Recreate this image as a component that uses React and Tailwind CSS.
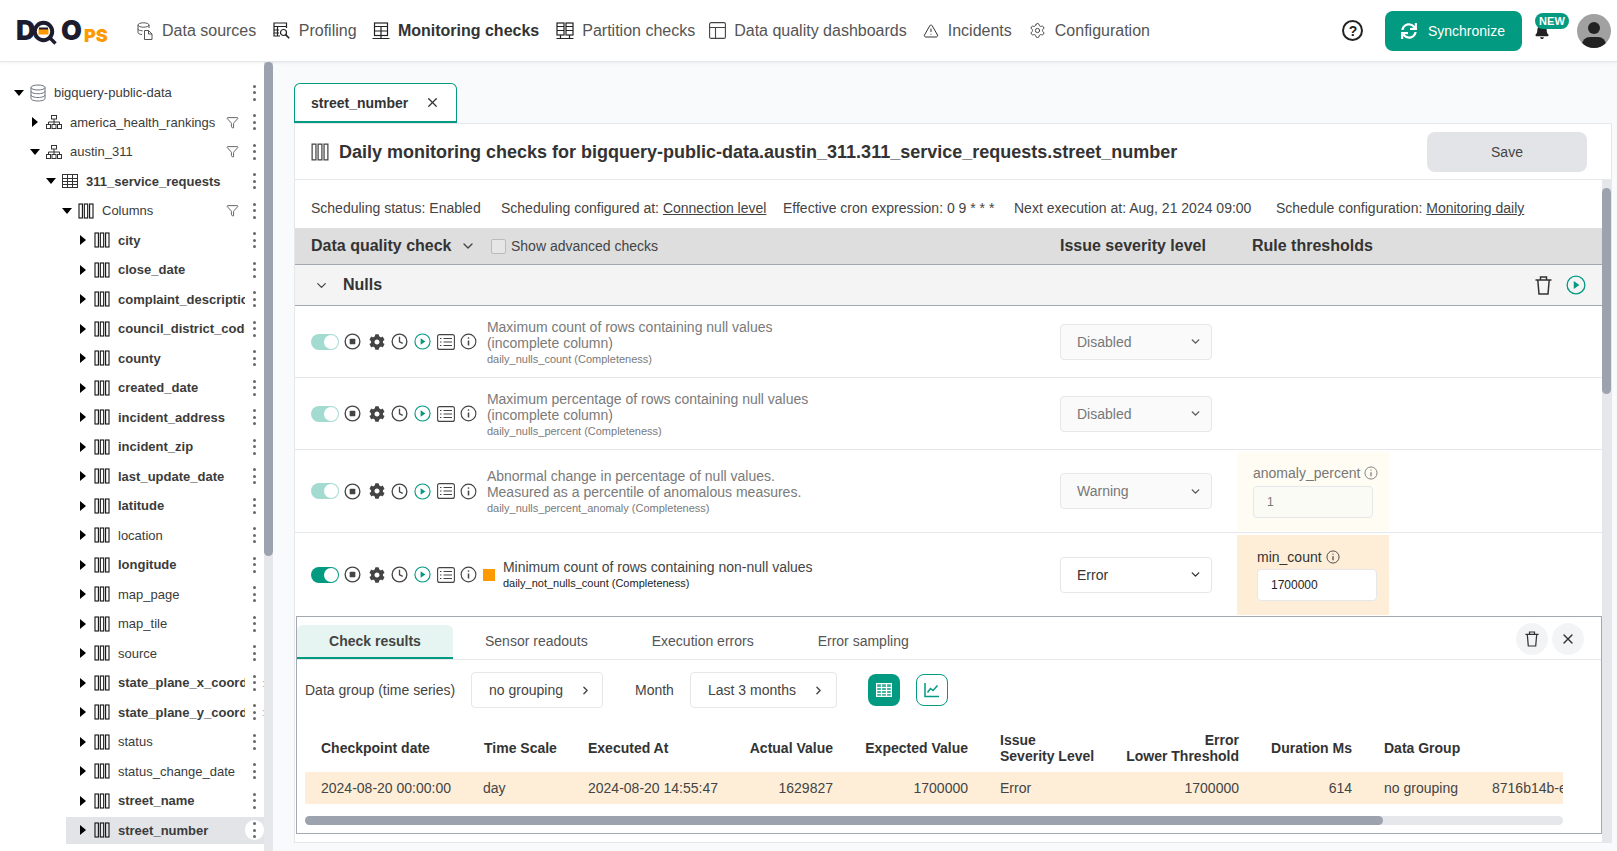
import { FaBell, FaCog, FaSync } from "react-icons/fa";
import { ChevronDown, ChevronRight, Filter, Settings, TriangleAlert, X } from "lucide-react";

const tree = [
  { name: "bigquery-public-data", level: 0, open: true, icon: "db" },
  { name: "america_health_rankings", level: 1, icon: "schema", filter: true },
  { name: "austin_311", level: 1, open: true, icon: "schema", filter: true },
  { name: "311_service_requests", level: 2, open: true, icon: "table", bold: true },
  { name: "Columns", level: 3, open: true, icon: "col", filter: true },
  { name: "city", bold: true },
  { name: "close_date", bold: true },
  { name: "complaint_description", bold: true },
  { name: "council_district_code", bold: true },
  { name: "county", bold: true },
  { name: "created_date", bold: true },
  { name: "incident_address", bold: true },
  { name: "incident_zip", bold: true },
  { name: "last_update_date", bold: true },
  { name: "latitude", bold: true },
  { name: "location" },
  { name: "longitude", bold: true },
  { name: "map_page" },
  { name: "map_tile" },
  { name: "source" },
  { name: "state_plane_x_coordinate", bold: true, extra: true },
  { name: "state_plane_y_coordinate", bold: true, extra: true },
  { name: "status" },
  { name: "status_change_date" },
  { name: "street_name", bold: true },
  { name: "street_number", bold: true, active: true },
];

const indent = ["pl-[14px]", "pl-[30px]", "pl-[46px]", "pl-[62px]", "pl-[78px]"];

function ColIcon({ className = "w-4 h-4", color = "#111" }) {
  return (
    <svg viewBox="0 0 16 16" className={className} fill="none" stroke={color} strokeWidth="1.1">
      <rect x="1" y="1" width="3.4" height="14" />
      <rect x="6.3" y="1" width="3.4" height="14" />
      <rect x="11.6" y="1" width="3.4" height="14" />
    </svg>
  );
}

function DbIcon() {
  return (
    <svg viewBox="0 0 16 18" className="w-4 h-[18px]" fill="none" stroke="#6b7280" strokeWidth="1">
      <ellipse cx="8" cy="3.5" rx="7" ry="2.5" />
      <path d="M1 3.5v11c0 1.4 3.1 2.5 7 2.5s7-1.1 7-2.5v-11M1 7.2c0 1.4 3.1 2.5 7 2.5s7-1.1 7-2.5M1 11c0 1.4 3.1 2.5 7 2.5s7-1.1 7-2.5" />
    </svg>
  );
}

function SchemaIcon() {
  return (
    <svg viewBox="0 0 16 14" className="w-4 h-[14px]" fill="none" stroke="#333" strokeWidth="1">
      <rect x="5.5" y="0.5" width="5" height="3.5" />
      <rect x="0.5" y="9.5" width="4" height="4" />
      <rect x="6" y="9.5" width="4" height="4" />
      <rect x="11.5" y="9.5" width="4" height="4" />
      <path d="M8 4v5.5M2.5 9.5V7h11v2.5" />
    </svg>
  );
}

function TableIcon() {
  return (
    <svg viewBox="0 0 16 14" className="w-4 h-[14px]" fill="none" stroke="#333" strokeWidth="1">
      <rect x="0.5" y="0.5" width="15" height="13" />
      <path d="M0.5 4.5h15M0.5 7.5h15M0.5 10.5h15M5.5 0.5v13M10.5 0.5v13" />
    </svg>
  );
}

function Dots({ boxed }) {
  return (
    <div className={`flex flex-col items-center justify-center gap-[3.5px] ${boxed ? "w-[20px] h-[20px] rounded-full bg-white" : "w-[20px] h-[20px]"}`}>
      <span className="w-[3px] h-[3px] rounded-full bg-[#666]" />
      <span className="w-[3px] h-[3px] rounded-full bg-[#666]" />
      <span className="w-[3px] h-[3px] rounded-full bg-[#666]" />
    </div>
  );
}

function TreeRow({ item }) {
  const level = item.level ?? 4;
  const icon = item.icon ?? "col";
  return (
    <div className={`relative flex items-center h-[29.5px] ${indent[level]}`}>
      {item.active && <div className="absolute left-[66px] right-0 top-[1px] bottom-[1.5px] bg-[#e2e4e8]" />}
      <div className="relative w-4 flex justify-start">
        {item.open ? (
          <span className="w-0 h-0 border-x-[5px] border-x-transparent border-t-[6px] border-t-black" />
        ) : (
          <span className="ml-[2px] w-0 h-0 border-y-[5.5px] border-y-transparent border-l-[6px] border-l-black" />
        )}
      </div>
      <div className="relative w-4 flex justify-center">
        {icon === "db" && <DbIcon />}
        {icon === "schema" && <SchemaIcon />}
        {icon === "table" && <TableIcon />}
        {icon === "col" && <ColIcon />}
      </div>
      <div className={`relative ml-2 flex-1 min-w-0 overflow-hidden whitespace-nowrap text-[13px] text-[#3b3b3b] ${item.bold ? "font-bold" : ""}`}>
        {item.name}
      </div>
      {item.filter && (
        <div className="relative mr-[3px] w-5 flex justify-center">
          <Filter className="w-[13px] h-[13px] text-[#444]" strokeWidth={1.5} />
        </div>
      )}
      <div className="relative w-[19px] flex justify-start">
        <Dots boxed={item.active} />
        {item.extra && <span className="absolute left-[17px] top-[3px] text-[10px] text-[#aaa]">:</span>}
      </div>
    </div>
  );
}

function DataSourcesIcon() {
  return (
    <svg viewBox="0 0 16 18" className="w-4 h-[18px]" fill="none" stroke="#555" strokeWidth="1">
      <ellipse cx="6.5" cy="3" rx="5.5" ry="2.2" />
      <path d="M1 3v7.5c0 1 1.5 1.8 4 2M12 3v3M1 6.8c0 1.1 2 2 4.5 2" />
      <path d="M7.5 8.5h4l3.5 3.5v5.5h-7.5z" />
      <path d="M11.5 8.5v3.5H15" />
    </svg>
  );
}

function ProfilingIcon() {
  return (
    <svg viewBox="0 0 17 17" className="w-[17px] h-[17px]" fill="none" stroke="#222" strokeWidth="1.2">
      <path d="M13.5 6V1H1v13h6" />
      <path d="M1 4.5h12.5M1 8h5M1 11h5M4.5 4.5V14" />
      <circle cx="10.5" cy="10.5" r="3" />
      <path d="M12.6 12.6l3.6 3.6" strokeWidth="1.6" />
    </svg>
  );
}

function MonitoringIcon() {
  return (
    <svg viewBox="0 0 18 18" className="w-[18px] h-[18px]" fill="none" stroke="#222" strokeWidth="1.2">
      <rect x="2.5" y="1" width="13" height="12.5" />
      <path d="M2.5 4.5h13M2.5 9h13M9 4.5v9M9 13.5V16M0.5 16.5h17" />
    </svg>
  );
}

function PartitionIcon() {
  return (
    <svg viewBox="0 0 18 18" className="w-[18px] h-[18px]" fill="none" stroke="#222" strokeWidth="1.2">
      <rect x="1" y="1" width="7" height="12" />
      <rect x="10" y="1" width="7" height="12" />
      <path d="M1 4.5h7M10 4.5h7M1 8.5h7M10 8.5h7M4.5 13v3M13.5 13v3M0.5 16.5h17" />
    </svg>
  );
}

function DashboardIcon() {
  return (
    <svg viewBox="0 0 17 17" className="w-[17px] h-[17px]" fill="none" stroke="#444" strokeWidth="1.1">
      <rect x="0.6" y="0.6" width="15.8" height="15.8" rx="1.5" />
      <path d="M0.6 5.5h15.8M6.5 5.5v10.9" />
    </svg>
  );
}

function NavItem({ icon, label, bold, className }) {
  return (
    <div className={`flex items-center ${className}`}>
      <div className="w-[18px] flex justify-center">{icon}</div>
      <span className={`ml-2 text-base whitespace-nowrap ${bold ? "font-bold text-[#333]" : "text-[#555]"}`}>{label}</span>
    </div>
  );
}

function Header() {
  return (
    <div className="relative z-10 h-[62px] shrink-0 flex items-center bg-white border-b border-[#e5e7eb] shadow-[0_1px_3px_rgba(0,0,0,0.06)]">
      <div className="relative ml-[16px] w-[94px] h-[24px] font-[Inter,sans-serif] font-black text-[#1c1c2e]">
        <span className="absolute left-0 top-[-3px] text-[27px] leading-[30px]">D</span>
        <svg viewBox="0 0 26 26" className="absolute left-[16px] top-[1px] w-[26px] h-[26px]">
          <circle cx="11.5" cy="11.5" r="8.7" fill="none" stroke="#1c1c2e" strokeWidth="4" />
          <path d="M6.5 9h10v5.5h-10z" fill="#ff9900" />
          <path d="M7 7.5h9v2H7z" fill="#1c1c2e" />
          <path d="M17 17l6.5 6.5" stroke="#1c1c2e" strokeWidth="3.4" />
        </svg>
        <span className="absolute left-[45px] top-[-3px] text-[27px] leading-[30px]">O</span>
        <span className="absolute left-[68px] top-[7px] text-[18px] leading-[20px] text-[#ff9900]">PS</span>
      </div>
      <NavItem className="ml-[26px]" icon={<DataSourcesIcon />} label="Data sources" />
      <NavItem className="ml-[16.5px]" icon={<ProfilingIcon />} label="Profiling" />
      <NavItem className="ml-[15.3px]" icon={<MonitoringIcon />} label="Monitoring checks" bold />
      <NavItem className="ml-[17px]" icon={<PartitionIcon />} label="Partition checks" />
      <NavItem className="ml-[13px]" icon={<DashboardIcon />} label="Data quality dashboards" />
      <NavItem className="ml-[15px]" icon={<TriangleAlert className="w-4 h-4 text-[#333]" strokeWidth={1.5} />} label="Incidents" />
      <NavItem className="ml-[17px]" icon={<Settings className="w-[17px] h-[17px] text-[#444]" strokeWidth={1.4} />} label="Configuration" />
      <div className="ml-[192.5px] w-[21px] h-[21px] rounded-full border-2 border-[#222] flex items-center justify-center text-[14px] font-bold leading-none text-[#222]">?</div>
      <div className="ml-[21.5px] w-[137px] h-10 rounded-lg bg-[#029a80] flex items-center text-white">
        <FaSync className="ml-4 w-4 h-4" />
        <span className="ml-[11px] text-sm">Synchronize</span>
      </div>
      <div className="relative ml-[13px] w-[42px] h-[40px]">
        <FaBell className="absolute left-0 top-[13px] w-[14px] h-[15px] text-[#222]" />
        <span className="absolute left-0 top-[2px] w-[34px] h-4 rounded-full bg-[#029a80] text-white text-[11px] font-bold leading-4 text-center">NEW</span>
      </div>
      <div className="relative ml-0 w-[34px] h-[34px] rounded-full bg-[#a1a1a1] overflow-hidden">
        <span className="absolute left-[11px] top-[8px] w-3 h-3 rounded-full bg-[#222]" />
        <span className="absolute left-[5px] top-[23px] w-6 h-4 rounded-full bg-[#222]" />
      </div>
    </div>
  );
}

function Sidebar() {
  return (
    <div className="relative flex w-[273px] shrink-0 h-full">
      <div className="w-[264px] h-full bg-white pt-4 overflow-hidden">
        {tree.map((item) => (
          <TreeRow key={item.name} item={item} />
        ))}
      </div>
      <div className="w-[9px] h-full bg-[#e5e7eb]">
        <div className="w-[9px] h-[494px] rounded-full bg-[#9ca3af]" />
      </div>
    </div>
  );
}

function StopIcon() {
  return (
    <svg viewBox="0 0 18 18" className="w-[17px] h-[17px]" fill="none">
      <circle cx="9" cy="9" r="7.8" stroke="#444" strokeWidth="1.4" />
      <rect x="6" y="6" width="6" height="6" rx="1" fill="#444" />
    </svg>
  );
}

function ClockIcon() {
  return (
    <svg viewBox="0 0 18 18" className="w-[17px] h-[17px]" fill="none" stroke="#444" strokeWidth="1.4">
      <circle cx="9" cy="9" r="7.8" />
      <path d="M9 4v5.3l3.4 1.6" />
    </svg>
  );
}

function PlayIcon({ className = "w-[17px] h-[17px]" }) {
  return (
    <svg viewBox="0 0 18 18" className={className} fill="none">
      <circle cx="9" cy="9" r="8" stroke="#029a80" strokeWidth="1.2" />
      <path d="M7 5.5l5 3.5-5 3.5z" fill="#029a80" />
    </svg>
  );
}

function ListIcon() {
  return (
    <svg viewBox="0 0 18 16" className="w-[18px] h-4" fill="none" stroke="#444" strokeWidth="1.1">
      <rect x="0.6" y="0.6" width="16.8" height="14.8" rx="2" />
      <path d="M6.5 4.5h8.5M6.5 8h8.5M6.5 11.5h8.5M3 4.5h1.5M3 8h1.5M3 11.5h1.5" />
    </svg>
  );
}

function InfoIcon({ className = "w-[17px] h-[17px]" }) {
  return (
    <svg viewBox="0 0 18 18" className={className} fill="none" stroke="#444" strokeWidth="1.2">
      <circle cx="9" cy="9" r="7.8" />
      <path d="M9 8v5.2" strokeWidth="1.6" />
      <circle cx="9" cy="5.3" r="0.9" fill="#444" stroke="none" />
    </svg>
  );
}

function TrashIcon({ className = "w-[17px] h-[19px]" }) {
  return (
    <svg viewBox="0 0 17 19" className={className} fill="none" stroke="#333" strokeWidth="1.5">
      <path d="M0.5 4h16M5.5 4V1h6v3M2.8 4l1.2 14h9l1.2-14" />
    </svg>
  );
}

function RowIcons({ on }) {
  return (
    <>
      <div className={`relative w-[28px] h-4 rounded-full ${on ? "bg-[#029a80]" : "bg-[#a3dbd1]"}`}>
        <span className="absolute right-[1px] top-[1px] w-[14px] h-[14px] rounded-full bg-white" />
      </div>
      <div className="ml-[2.4px] flex items-center">
        <div className="w-[23.2px] flex justify-center"><StopIcon /></div>
        <div className="w-[23.2px] flex justify-center"><FaCog className="ml-[1px] w-4 h-4 text-[#444]" /></div>
        <div className="w-[23.2px] flex justify-center"><ClockIcon /></div>
        <div className="w-[23.2px] flex justify-center"><PlayIcon /></div>
        <div className="w-[23.2px] flex justify-center"><ListIcon /></div>
        <div className="w-[23.2px] flex justify-center"><InfoIcon /></div>
      </div>
    </>
  );
}

function SeveritySelect({ value, on }) {
  return (
    <div className={`w-[152px] h-9 shrink-0 flex items-center justify-between rounded border border-[#e5e7eb] pl-4 pr-[9px] text-sm ${on ? "bg-white text-[#333]" : "bg-[#fafafa] text-[#777]"}`}>
      {value}
      <ChevronDown className={`w-[13px] h-[13px] ${on ? "text-[#333]" : "text-[#555]"}`} strokeWidth={2.5} />
    </div>
  );
}

function CheckRow({ title, code, severity, h, threshold }) {
  return (
    <div className={`flex items-center border-b border-[#e5e7eb] pl-4 ${h}`}>
      <div className="w-[749px] shrink-0 flex items-center">
        <RowIcons />
        <div className="ml-[6.4px] pt-[2px] text-sm leading-4 text-[#7a7a7a]">
          {title.map((line) => (
            <div key={line}>{line}</div>
          ))}
          <div className="text-[11px]">{code}</div>
        </div>
      </div>
      <SeveritySelect value={severity} />
      {threshold}
    </div>
  );
}

function ThresholdWarning() {
  return (
    <div className="ml-[25px] w-[152px] h-[79px] bg-[#fffdf3] pl-4 pt-[12px]">
      <div className="flex items-center text-sm leading-[18px] text-[#777]">
        anomaly_percent
        <InfoIcon className="ml-1 w-[14px] h-[14px] opacity-70" />
      </div>
      <div className="mt-[4px] w-[120px] h-8 rounded border border-[#e5e7eb] bg-[#fbfbf6] pl-[13px] text-xs leading-[30px] text-[#777]">1</div>
    </div>
  );
}

function ThresholdError() {
  return (
    <div className="ml-[25px] w-[152px] h-[80px] bg-[#feeed8] pl-5 pt-[13px]">
      <div className="flex items-center text-sm leading-[18px] text-[#333]">
        min_count
        <InfoIcon className="ml-1 w-[14px] h-[14px]" />
      </div>
      <div className="mt-[3px] w-[120px] h-8 rounded border border-[#e5e7eb] bg-white pl-[13px] text-xs leading-[30px] text-[#222]">1700000</div>
    </div>
  );
}

function ResultsPanel() {
  const head = "text-sm font-bold leading-4 text-[#333]";
  return (
    <div className="ml-[1px] w-[1306px] h-[218px] border border-[#a3a8b3] bg-white">
      <div className="flex items-end h-[43px] border-b border-[#e5e7eb] relative">
        <div className="w-[156px] h-[34px] rounded-t-md border-b-2 border-[#029a80] bg-[#e6f5f2] text-sm font-bold text-[#444] text-center leading-[32px]">Check results</div>
        <div className="px-8 h-[34px] text-sm text-[#555] leading-[32px]">Sensor readouts</div>
        <div className="px-8 h-[34px] text-sm text-[#555] leading-[32px]">Execution errors</div>
        <div className="px-8 h-[34px] text-sm text-[#555] leading-[32px]">Error sampling</div>
        <div className="absolute left-[1219px] top-[6px] w-8 h-8 rounded-full bg-[#f3f4f6] flex items-center justify-center">
          <TrashIcon className="w-[14px] h-4" />
        </div>
        <div className="absolute left-[1255px] top-[6px] w-8 h-8 rounded-full bg-[#f3f4f6] flex items-center justify-center">
          <X className="w-4 h-4 text-[#333]" strokeWidth={2} />
        </div>
      </div>
      <div className="flex items-center h-9 mt-[12px] ml-2 text-sm text-[#444]">
        <span className="w-[166px]">Data group (time series)</span>
        <div className="w-[132px] h-9 flex items-center justify-between rounded border border-[#e5e7eb] pl-[17px] pr-[10px]">
          no grouping
          <ChevronRight className="w-[13px] h-[13px]" strokeWidth={2.5} />
        </div>
        <span className="ml-8 w-[55px]">Month</span>
        <div className="w-[147px] h-9 flex items-center justify-between rounded border border-[#e5e7eb] pl-[17px] pr-[11px]">
          Last 3 months
          <ChevronRight className="w-[13px] h-[13px]" strokeWidth={2.5} />
        </div>
        <div className="ml-[31px] w-8 h-8 rounded-lg bg-[#029a80] flex items-center justify-center">
          <svg viewBox="0 0 16 14" className="w-4 h-[14px]" fill="none" stroke="#fff" strokeWidth="1.2">
            <rect x="0.6" y="0.6" width="14.8" height="12.8" fill="#fff" fillOpacity="0.25" />
            <path d="M0.6 4.5h14.8M0.6 7.5h14.8M0.6 10.5h14.8M5.5 0.6v12.8M10.5 0.6v12.8" />
          </svg>
        </div>
        <div className="ml-4 w-8 h-8 rounded-lg border border-[#029a80] flex items-center justify-center">
          <svg viewBox="0 0 16 16" className="w-4 h-4" fill="none" stroke="#029a80" strokeWidth="1.5">
            <path d="M1 1v13.5h14" />
            <path d="M3.5 10.5l3-4 2.5 2 4.5-5" />
          </svg>
        </div>
      </div>
      <div className="mx-2 w-[1258px] overflow-hidden">
        <div className="mt-[20px] h-[40px] grid grid-cols-[163px_104px_162px_115px_135px_126px_144px_113px_109px_1fr] items-center">
          <div className={`${head} pl-4`}>Checkpoint date</div>
          <div className={`${head} pl-4`}>Time Scale</div>
          <div className={`${head} pl-4`}>Executed At</div>
          <div className={`${head} pr-4 text-right`}>Actual Value</div>
          <div className={`${head} pr-4 text-right`}>Expected Value</div>
          <div className={`${head} pl-4`}>Issue<br />Severity Level</div>
          <div className={`${head} pr-[15px] text-right`}>Error<br />Lower Threshold</div>
          <div className={`${head} pr-[15px] text-right`}>Duration Ms</div>
          <div className={`${head} pl-[17px]`}>Data Group</div>
          <div />
        </div>
        <div className="mt-[4px] h-8 grid grid-cols-[163px_104px_162px_115px_135px_126px_144px_113px_109px_1fr] items-center bg-[#feeed8] text-sm text-[#444] whitespace-nowrap">
          <div className="pl-4">2024-08-20 00:00:00</div>
          <div className="pl-[15px]">day</div>
          <div className="pl-4">2024-08-20 14:55:47</div>
          <div className="pr-4 text-right">1629827</div>
          <div className="pr-4 text-right">1700000</div>
          <div className="pl-4">Error</div>
          <div className="pr-[15px] text-right">1700000</div>
          <div className="pr-[15px] text-right">614</div>
          <div className="pl-[17px]">no grouping</div>
          <div className="pl-4 overflow-hidden">8716b14b-e9c1</div>
        </div>
        <div className="mt-[12px] h-[9px] rounded-full bg-[#e5e7eb]">
          <div className="w-[1078px] h-[9px] rounded-full bg-[#9ca3af]" />
        </div>
      </div>
    </div>
  );
}

function MainPanel() {
  return (
    <div className="ml-[21px] w-[1318px] h-[720px] border border-[#e5e7eb] bg-white flex flex-col">
      <div className="h-[56px] shrink-0 flex items-center border-b border-[#e5e7eb] pl-4">
        <ColIcon className="w-[18px] h-[18px]" color="#444" />
        <h1 className="ml-[10px] text-lg font-bold text-[#333]">
          Daily monitoring checks for bigquery-public-data.austin_311.311_service_requests.street_number
        </h1>
        <div className="ml-auto mr-6 w-40 h-10 rounded-lg bg-[#e2e4e8] flex items-center justify-center text-sm text-[#444]">Save</div>
      </div>
      <div className="flex flex-1 min-h-0">
        <div className="w-[1307px] shrink-0">
          <div className="relative h-[48px] pt-2 text-sm text-[#444] whitespace-nowrap">
            <div className="flex items-center h-[40px] pl-4">
              <span className="w-[190px]">Scheduling status: Enabled</span>
              <span className="w-[282px]">Scheduling configured at: <u>Connection level</u></span>
              <span className="w-[231px]">Effective cron expression: 0 9 * * *</span>
              <span className="w-[262px]">Next execution at: Aug, 21 2024 09:00</span>
              <span>Schedule configuration: <u>Monitoring daily</u></span>
            </div>
          </div>
          <div className="h-[37px] flex items-center border-b border-[#a3a8b3] bg-[#dedede] pl-4 text-base font-bold text-[#333]">
            <span className="w-[149px]">Data quality check</span>
            <ChevronDown className="w-4 h-4 text-[#444]" strokeWidth={2} />
            <span className="ml-[15px] w-[15px] h-[15px] rounded-[2px] border border-[#bbb] bg-[#e6e6e6]" />
            <span className="ml-[5px] w-[549px] text-sm font-normal text-[#444]">Show advanced checks</span>
            <span className="w-[192px]">Issue severity level</span>
            <span>Rule thresholds</span>
          </div>
          <div className="h-[41px] flex items-center border-b border-[#a3a8b3] bg-[#f4f4f4] pl-[19px] text-base font-bold text-[#333]">
            <ChevronDown className="w-[15px] h-[15px] text-[#444]" strokeWidth={2} />
            <span className="ml-[14px]">Nulls</span>
            <TrashIcon className="ml-auto w-[17px] h-[19px]" />
            <PlayIcon className="ml-[14px] mr-4 w-5 h-5" />
          </div>
          <CheckRow
            h="h-[72px]"
            title={["Maximum count of rows containing null values", "(incomplete column)"]}
            code="daily_nulls_count (Completeness)"
            severity="Disabled"
          />
          <CheckRow
            h="h-[72px]"
            title={["Maximum percentage of rows containing null values", "(incomplete column)"]}
            code="daily_nulls_percent (Completeness)"
            severity="Disabled"
          />
          <CheckRow
            h="h-[83px]"
            title={["Abnormal change in percentage of null values.", "Measured as a percentile of anomalous measures."]}
            code="daily_nulls_percent_anomaly (Completeness)"
            severity="Warning"
            threshold={<ThresholdWarning />}
          />
          <div className="h-[83px] flex items-center pl-4">
            <div className="w-[749px] shrink-0 flex items-center">
              <RowIcons on />
              <span className="ml-[2.4px] w-3 h-3 bg-[#ff9900]" />
              <div className="ml-2 text-sm leading-4 text-[#444]">
                <div>Minimum count of rows containing non-null values</div>
                <div className="text-[11px] text-[#222]">daily_not_nulls_count (Completeness)</div>
              </div>
            </div>
            <SeveritySelect value="Error" on />
            <ThresholdError />
          </div>
          <ResultsPanel />
        </div>
        <div className="w-[9px] shrink-0 bg-[#e5e7eb]">
          <div className="mt-[8px] w-[9px] h-[206px] rounded-full bg-[#9ca3af]" />
        </div>
      </div>
    </div>
  );
}

export default function App() {
  return (
    <div className="w-[1617px] h-[851px] overflow-hidden flex flex-col bg-[#f9fafb] font-[Liberation_Sans,Arial,sans-serif] text-[#444]">
      <Header />
      <div className="flex flex-1 min-h-0">
        <Sidebar />
        <div className="flex-1 min-w-0 pt-[21px]">
          <div className="ml-[21px] w-[163px] h-[40px] flex items-center rounded-t-md border border-b-2 border-[#029a80] bg-white pl-4 text-sm font-bold text-[#333]">
            street_number
            <X className="ml-[17px] w-[15px] h-[15px] text-[#333]" strokeWidth={2} />
          </div>
          <MainPanel />
        </div>
      </div>
    </div>
  );
}
